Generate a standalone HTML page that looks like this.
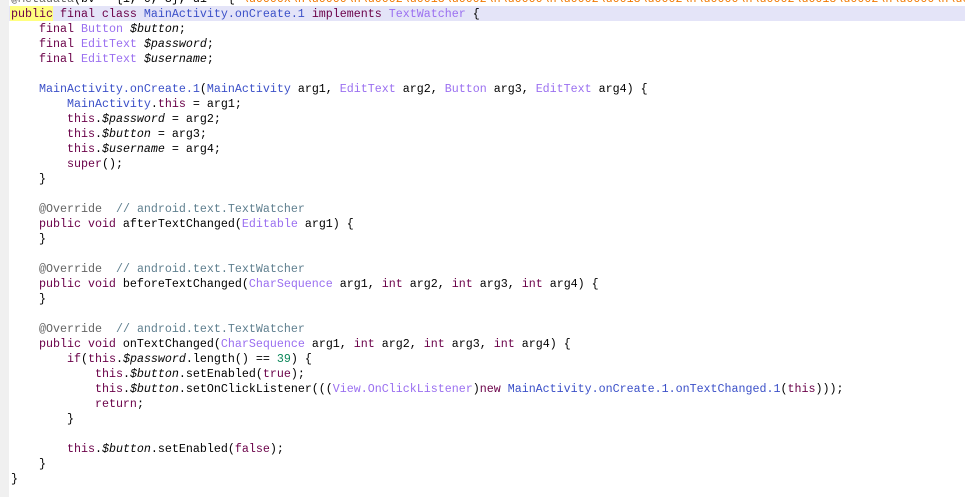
<!DOCTYPE html>
<html><head><style>
html,body{margin:0;padding:0;background:#fff;width:965px;height:497px;overflow:hidden;}
.g{position:absolute;left:0;top:0;width:9px;height:497px;background:#f0f0f0;}
.hl{position:absolute;left:9px;top:6px;width:956px;height:15px;background:#e4e4f8;}
.yl{position:absolute;left:10px;top:6px;width:43px;height:15px;background:#ffff80;}
pre{position:absolute;left:11px;top:-8px;margin:0;font-family:"Liberation Mono",monospace;font-size:11.67px;line-height:15px;color:#000;}
.k{color:#6a0048;}
.t{color:#9a6ff0;}
.b{color:#3b50c8;}
.c{color:#5f7f8f;}
.a{color:#646464;}
.s{color:#f07800;}
.n{color:#098658;}
i{font-style:italic;}
</style></head><body>
<div class="g"></div><div class="hl"></div><div class="yl"></div>
<pre><span class="a">@Metadata</span>(bv = {1, 0, 3}, d1 = {<span class="s">"\u0000x\n\u0000\n\u0002\u0018\u0002\n\u0000\n\u0002\u0018\u0002\n\u0000\n\u0002\u0018\u0002\n\u0000\n\u0002</span>
<span class="k">public final class</span> <span class="b">MainActivity.onCreate.1</span> <span class="k">implements</span> <span class="t">TextWatcher</span> {
    <span class="k">final</span> <span class="t">Button</span> <i>$button</i>;
    <span class="k">final</span> <span class="t">EditText</span> <i>$password</i>;
    <span class="k">final</span> <span class="t">EditText</span> <i>$username</i>;

    <span class="b">MainActivity.onCreate.1</span>(<span class="b">MainActivity</span> arg1, <span class="t">EditText</span> arg2, <span class="t">Button</span> arg3, <span class="t">EditText</span> arg4) {
        <span class="b">MainActivity</span>.<span class="k">this</span> = arg1;
        <span class="k">this</span>.<i>$password</i> = arg2;
        <span class="k">this</span>.<i>$button</i> = arg3;
        <span class="k">this</span>.<i>$username</i> = arg4;
        <span class="k">super</span>();
    }

    <span class="a">@Override</span>  <span class="c">// android.text.TextWatcher</span>
    <span class="k">public void</span> afterTextChanged(<span class="t">Editable</span> arg1) {
    }

    <span class="a">@Override</span>  <span class="c">// android.text.TextWatcher</span>
    <span class="k">public void</span> beforeTextChanged(<span class="t">CharSequence</span> arg1, <span class="k">int</span> arg2, <span class="k">int</span> arg3, <span class="k">int</span> arg4) {
    }

    <span class="a">@Override</span>  <span class="c">// android.text.TextWatcher</span>
    <span class="k">public void</span> onTextChanged(<span class="t">CharSequence</span> arg1, <span class="k">int</span> arg2, <span class="k">int</span> arg3, <span class="k">int</span> arg4) {
        <span class="k">if</span>(<span class="k">this</span>.<i>$password</i>.length() == <span class="n">39</span>) {
            <span class="k">this</span>.<i>$button</i>.setEnabled(<span class="k">true</span>);
            <span class="k">this</span>.<i>$button</i>.setOnClickListener(((<span class="t">View.OnClickListener</span>)<span class="k">new</span> <span class="b">MainActivity.onCreate.1.onTextChanged.1</span>(<span class="k">this</span>)));
            <span class="k">return</span>;
        }

        <span class="k">this</span>.<i>$button</i>.setEnabled(<span class="k">false</span>);
    }
}</pre>
</body></html>
